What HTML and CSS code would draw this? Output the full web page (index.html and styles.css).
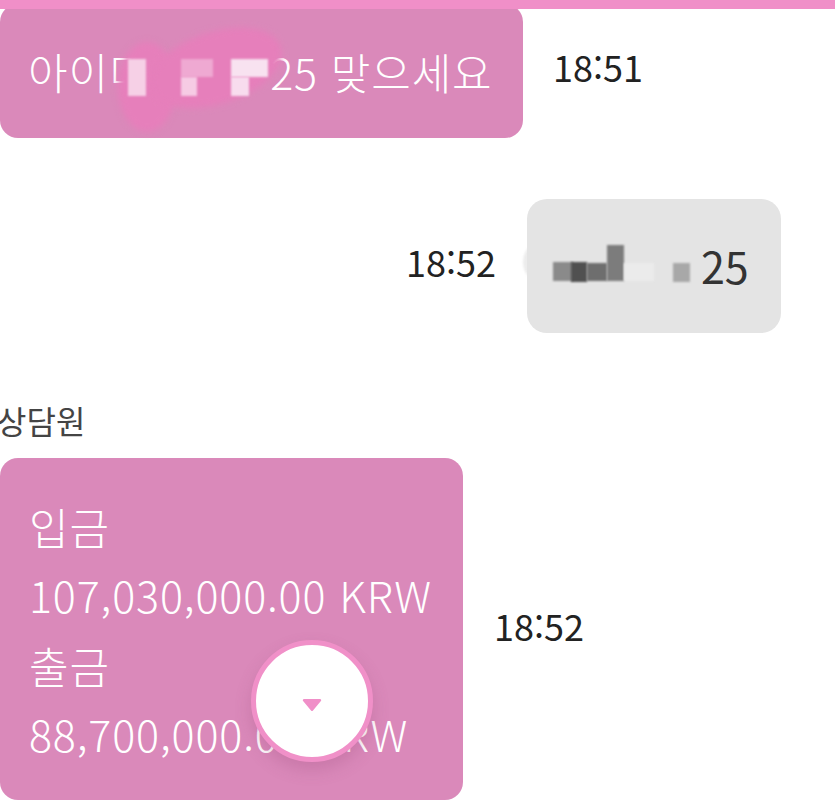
FILE: index.html
```html
<!DOCTYPE html>
<html lang="ko">
<head>
    <meta charset="UTF-8">
    <meta name="viewport" content="width=device-width, initial-scale=1.0">
    <title>상담 채팅</title>
    <link rel="stylesheet" href="styles.css">
</head>
<body>
    <div class="top-bar"></div>
    <div class="chat">
        <div class="row row-first">
            <div class="bubble bubble-agent bubble-id">
                <span class="id-text">아이디<span class="id-gap"></span>25 맞으세요</span>
                <span class="smear smear-a"></span>
                <span class="smear smear-b"></span>
                <span class="pix pix-1"></span>
                <span class="pix pix-2"></span>
                <span class="pix pix-3"></span>
                <span class="pix pix-4"></span>
                <span class="pix pix-5"></span>
            </div>
            <span class="time time-first">18:51</span>
        </div>

        <div class="row row-user">
            <span class="time time-user">18:52</span>
            <div class="bubble bubble-user">
                <span>25</span>
                <span class="dark dark-0"></span>
                <span class="dark dark-1"></span>
                <span class="dark dark-3"></span>
                <span class="dark dark-2"></span>
                <span class="dark dark-4"></span>
                <span class="dark dark-5"></span>
                <span class="dark dark-6"></span>
            </div>
        </div>

        <div class="sender">상담원</div>
        <div class="row">
            <div class="bubble bubble-agent bubble-amount">
                <div>입금</div>
                <div class="amount">107,030,000.00 KRW</div>
                <div>출금</div>
                <div class="amount">88,700,000.00 KRW</div>
            </div>
            <span class="time time-amount">18:52</span>
        </div>
    </div>

    <button class="scroll-btn" type="button">
        <svg class="arrow" width="20" height="14" viewBox="0 0 20 14">
            <path d="M2 1h16a1.2 1.2 0 0 1 .9 2L11 12.4a1.4 1.4 0 0 1-2 0L1.1 3A1.2 1.2 0 0 1 2 1z"/>
        </svg>
    </button>
</body>
</html>
```

FILE: styles.css
```css
body {
    margin: 0;
    height: 801px;
    overflow: hidden;
    background-color: #fff;
    font-family: "Noto Sans CJK KR", "Noto Sans", sans-serif;
    font-weight: 300;
    position: relative;
}
.top-bar {
    position: relative;
    z-index: 1;
    height: 9px;
    background-color: #f08fc8;
}
.chat {
    display: flex;
    flex-direction: column;
}
.row {
    display: flex;
    align-items: center;
}
.row-first {
    margin-top: -5px;
}
.bubble {
    position: relative;
    box-sizing: border-box;
    font-size: 43px;
    letter-spacing: 0.85px;
    border-radius: 18px;
}
.bubble-agent {
    background-color: #da89ba;
    color: #fff;
}
.bubble-id {
    width: 523px;
    height: 134px;
    padding-left: 28px;
    display: flex;
    align-items: center;
    white-space: pre;
}
.id-gap {
    display: inline-block;
    width: 121px;
}
.id-text {
    position: relative;
}
.time {
    font-size: 36px;
    font-weight: 400;
    color: #222;
}
.time-first {
    margin-left: 30px;
    margin-top: -10px;
}
.row-user {
    justify-content: flex-end;
    margin-top: 61px;
    padding-right: 54px;
}
.time-user {
    margin-right: 31px;
    margin-top: -10px;
}
.bubble-user {
    width: 254px;
    height: 134px;
    padding: 0 0 2px 174px;
    display: flex;
    align-items: center;
    background-color: #e4e4e4;
    color: #333;
    border-radius: 20px;
    font-weight: 400;
    letter-spacing: 0;
}
.sender {
    margin-top: 65px;
    margin-left: -3px;
    height: 60px;
    font-size: 32px;
    font-weight: 400;
    line-height: 44px;
    color: #444;
}
.bubble-amount {
    width: 463px;
    height: 342px;
    padding: 34px 0 0 29px;
    line-height: 69.5px;
    white-space: nowrap;
}
.amount {
    position: relative;
    top: -2px;
}
.time-amount {
    margin-left: 31px;
    margin-top: -8px;
}
/* blurred-out parts of the screenshot */
.smear {
    position: absolute;
    background-color: #e67fbb;
    filter: blur(3px);
}
.smear-a {
    left: 118px;
    top: 38px;
    width: 58px;
    height: 90px;
    border-radius: 50%;
}
.smear-b {
    left: 148px;
    top: 28px;
    width: 136px;
    height: 72px;
    border-radius: 50%;
    transform: rotate(-18deg);
}
.pix {
    position: absolute;
    filter: blur(1px);
}
.pix-1 {
    left: 128px;
    top: 55px;
    width: 18px;
    height: 37px;
    background-color: #f6d0e6;
}
.pix-2 {
    left: 181px;
    top: 55px;
    width: 32px;
    height: 18px;
    background-color: #efa9d2;
}
.pix-3 {
    left: 181px;
    top: 73px;
    width: 16px;
    height: 19px;
    background-color: #f6cbe4;
}
.pix-4 {
    left: 231px;
    top: 55px;
    width: 37px;
    height: 18px;
    background-color: #f8e2f0;
}
.pix-5 {
    left: 231px;
    top: 73px;
    width: 18px;
    height: 19px;
    background-color: #f8dcee;
}
.dark {
    position: absolute;
    filter: blur(1px);
}
.dark-0 {
    left: -4px;
    top: 46px;
    width: 24px;
    height: 34px;
    border-radius: 50%;
    background-color: #ececec;
    z-index: -1;
}
.dark-1 {
    left: 26px;
    top: 63px;
    width: 20px;
    height: 19px;
    background-color: #8a8a8a;
}
.dark-2 {
    left: 44px;
    top: 63px;
    width: 16px;
    height: 20px;
    background-color: #505050;
}
.dark-3 {
    left: 60px;
    top: 64px;
    width: 20px;
    height: 18px;
    background-color: #6e6e6e;
}
.dark-4 {
    left: 80px;
    top: 46px;
    width: 17px;
    height: 36px;
    background-color: #7c7c7c;
}
.dark-5 {
    left: 97px;
    top: 64px;
    width: 30px;
    height: 18px;
    background-color: #ebebeb;
}
.dark-6 {
    left: 146px;
    top: 64px;
    width: 17px;
    height: 19px;
    background-color: #a8a8a8;
}
.scroll-btn {
    position: absolute;
    z-index: 2;
    left: 251px;
    top: 640px;
    width: 122px;
    height: 122px;
    box-sizing: border-box;
    padding: 0;
    border: 5px solid #f090c8;
    border-radius: 50%;
    background-color: #fff;
    box-shadow: 0 8px 16px rgba(150, 70, 120, 0.25);
    display: flex;
    align-items: center;
    justify-content: center;
}
.arrow {
    margin-top: 8px;
    fill: #f08fc8;
}
```
